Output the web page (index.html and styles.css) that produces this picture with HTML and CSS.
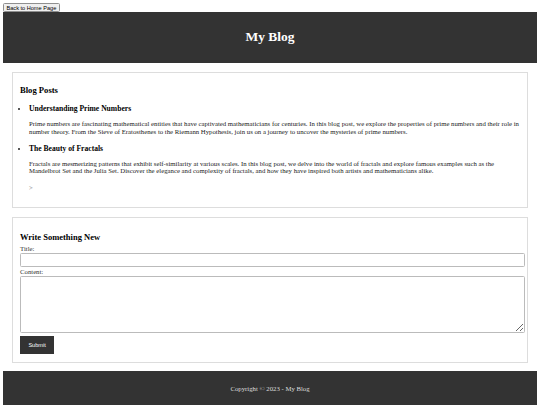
FILE: index.html
```html
<!DOCTYPE html>
<html lang="en">
<head>
  <meta charset="UTF-8">
  <meta name="viewport" content="width=device-width, initial-scale=1.0">
  <title>My Blog</title>
  <link rel="stylesheet" href="styles.css">
</head>
<body>
  <button type="button" class="back-button">Back to Home Page</button>

  <header class="site-header">
    <h1>My Blog</h1>
  </header>

  <main>
    <section class="card">
      <h2 class="card-title">Blog Posts</h2>
      <ul class="posts">
        <li>
          <h3>Understanding Prime Numbers</h3>
          <p>Prime numbers are fascinating mathematical entities that have captivated mathematicians for centuries. In this blog post, we explore the properties of prime numbers and their role in number theory. From the Sieve of Eratosthenes to the Riemann Hypothesis, join us on a journey to uncover the mysteries of prime numbers.</p>
        </li>
        <li>
          <h3>The Beauty of Fractals</h3>
          <p>Fractals are mesmerizing patterns that exhibit self-similarity at various scales. In this blog post, we delve into the world of fractals and explore famous examples such as the Mandelbrot Set and the Julia Set. Discover the elegance and complexity of fractals, and how they have inspired both artists and mathematicians alike.</p>
        </li>
      </ul>
      <p class="more">&gt;</p>
    </section>

    <section class="card">
      <h2 class="form-title">Write Something New</h2>
      <form class="post-form">
        <label for="title">Title:</label>
        <input type="text" id="title">
        <label for="content">Content:</label>
        <textarea id="content"></textarea>
        <button type="submit" class="submit-button">Submit</button>
      </form>
    </section>
  </main>

  <footer class="site-footer">
    <p>Copyright &copy; 2023 - My Blog</p>
  </footer>
</body>
</html>
```

FILE: styles.css
```css
body {
  margin: 3px;
  font-family: "Liberation Serif", serif;
  font-size: 6.75px;
  color: #222;
}

.back-button {
  display: block;
  font-family: "Liberation Sans", sans-serif;
  font-size: 5.6px;
  padding: 0.5px 2.5px;
  background-color: #efefef;
  border: 1px solid #8f8f8f;
  border-radius: 1.5px;
  color: #000;
}

.site-header {
  background-color: #333;
  color: #fff;
  text-align: center;
  padding: 8.4px;
}

.site-header h1 {
  font-size: 13.5px;
  margin: 9px 0;
}

.card {
  background-color: #fff;
  border: 1px solid #ddd;
  margin: 9px;
  padding: 8px 7px;
}

.card:last-child {
  margin-bottom: 8px;
}

.card-title {
  font-size: 8.6px;
  margin: 4.5px 0 8.5px;
  color: #000;
}

.posts {
  margin: 0;
  padding-left: 9px;
}

.posts h3 {
  font-size: 7.6px;
  margin: 9px 0 7px;
  color: #000;
}

.posts p {
  margin: 6.9px 0;
  line-height: 7.3px;
}

.more {
  margin: 9.5px 0 7.7px 9px;
  color: #888;
}

.form-title {
  font-size: 8.5px;
  margin: 6px 0 3.5px;
  color: #000;
}

.post-form label {
  display: block;
  color: #333;
  margin-bottom: 1px;
}

.post-form input,
.post-form textarea {
  display: block;
  width: 100%;
  padding: 2.8px 1.5px;
  margin-bottom: 1px;
  border: 1px solid #bbb;
  border-radius: 1.5px;
  font-size: 5.6px;
}

.post-form textarea {
  height: 49px;
  margin-top: 1.5px;
  margin-bottom: 3px;
}

.submit-button {
  background-color: #333;
  color: #fff;
  border: none;
  padding: 6px 8.4px;
  font-family: "Liberation Sans", sans-serif;
  font-size: 5.6px;
}

.site-footer {
  background-color: #333;
  color: #ddd;
  text-align: center;
  padding: 7px 8.4px 8.4px;
}
```
